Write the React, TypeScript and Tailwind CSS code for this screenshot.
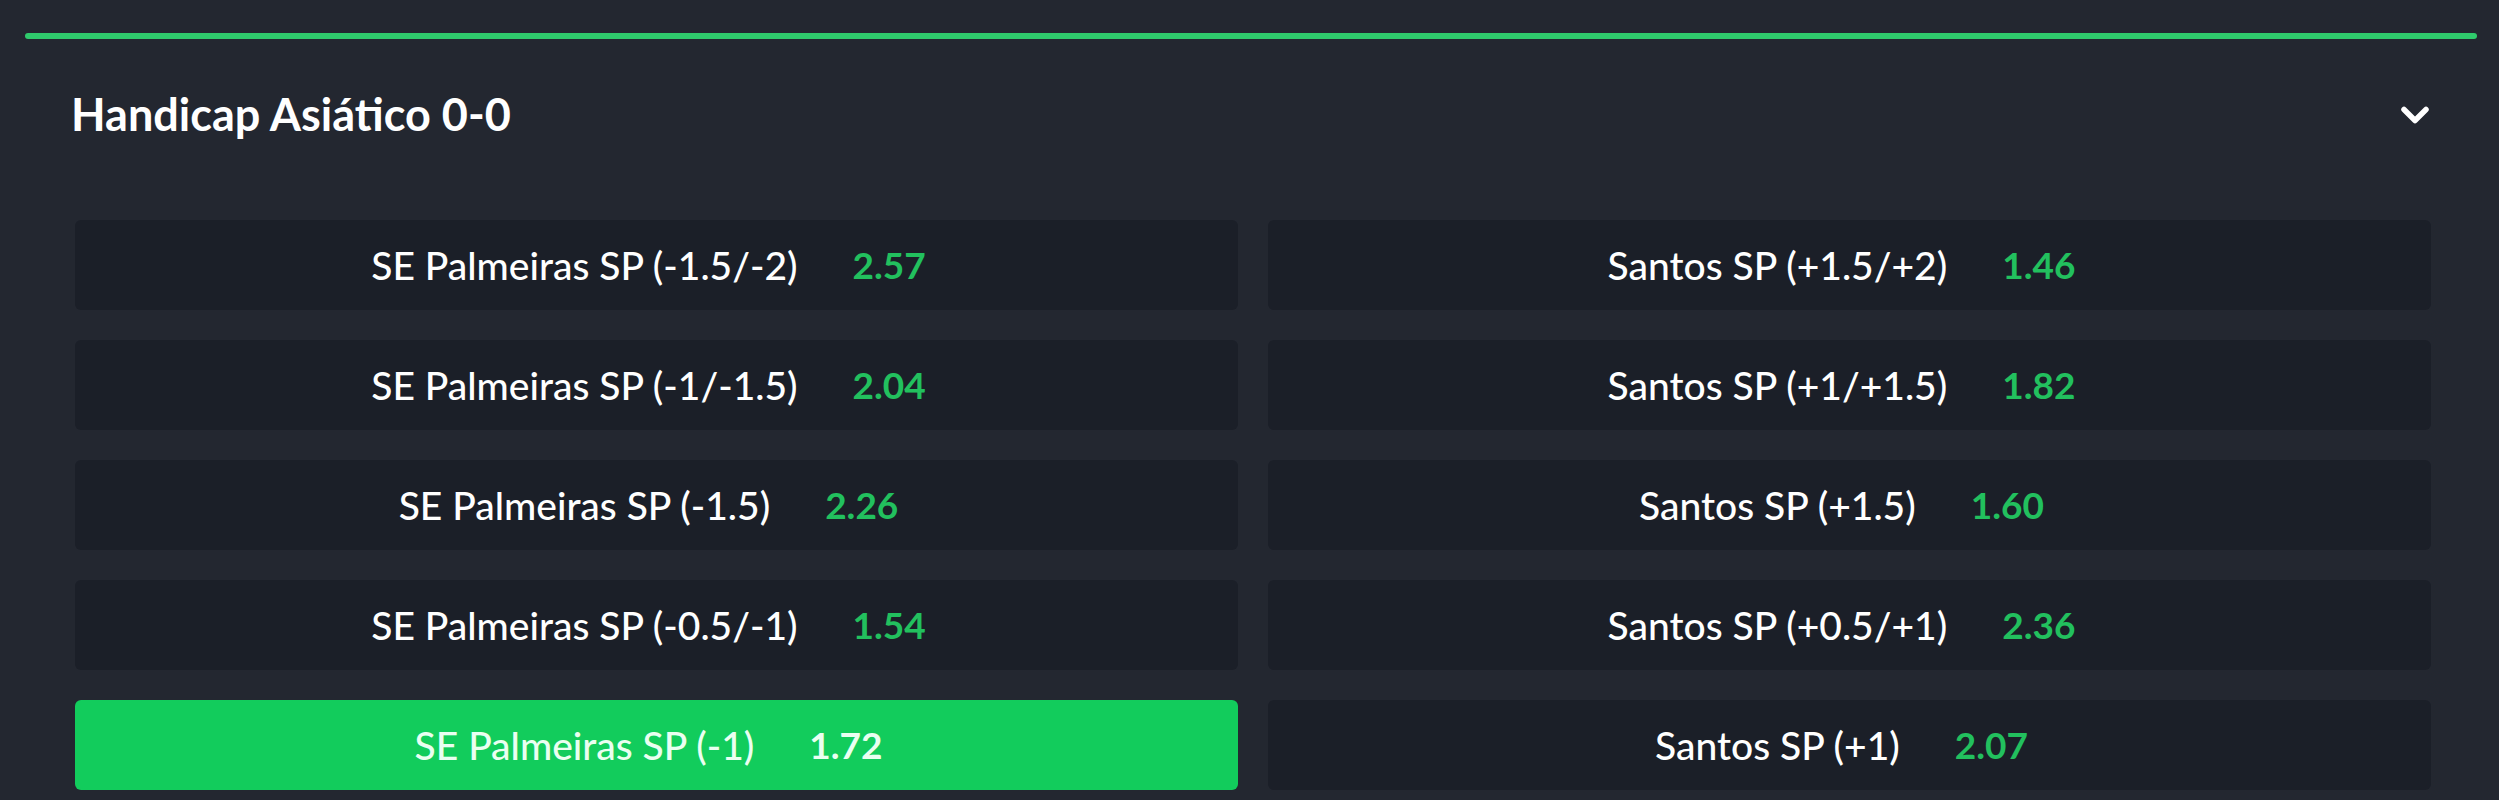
import { ChevronDown } from "lucide-react";

type Odd = {
  label: string;
  price: string;
  selected?: boolean;
};

const rows: [Odd, Odd][] = [
  [
    { label: "SE Palmeiras SP (-1.5/-2)", price: "2.57" },
    { label: "Santos SP (+1.5/+2)", price: "1.46" },
  ],
  [
    { label: "SE Palmeiras SP (-1/-1.5)", price: "2.04" },
    { label: "Santos SP (+1/+1.5)", price: "1.82" },
  ],
  [
    { label: "SE Palmeiras SP (-1.5)", price: "2.26" },
    { label: "Santos SP (+1.5)", price: "1.60" },
  ],
  [
    { label: "SE Palmeiras SP (-0.5/-1)", price: "1.54" },
    { label: "Santos SP (+0.5/+1)", price: "2.36" },
  ],
  [
    { label: "SE Palmeiras SP (-1)", price: "1.72", selected: true },
    { label: "Santos SP (+1)", price: "2.07" },
  ],
];

function OddButton({ odd }: { odd: Odd }) {
  return (
    <button
      className={
        odd.selected
          ? "flex h-[90px] items-center justify-center gap-[55px] rounded-md bg-[#12cc5c] pr-[16px] text-[#eafff1]"
          : "flex h-[90px] items-center justify-center gap-[55px] rounded-md bg-[#1b1f28] pr-[16px] text-white"
      }
    >
      <span className="text-[39px] font-medium">{odd.label}</span>
      <span
        className={
          odd.selected
            ? "text-[37px] font-bold text-[#eafff1]"
            : "text-[37px] font-bold text-[#22c05e]"
        }
      >
        {odd.price}
      </span>
    </button>
  );
}

export default function App() {
  return (
    <main
      className="h-[800px] w-full overflow-hidden bg-[#232730] pl-[25px] pr-[22px] pt-[33px]"
      style={{ fontFamily: "Lato, 'Noto Sans', sans-serif" }}
    >
      {/* green top border */}
      <div className="h-[6px] rounded-full bg-[#2fca6c]" />

      {/* header */}
      <div className="flex h-[152px] items-center justify-between pl-[46px] pr-[40px]">
        <h2 className="text-[45px] font-bold text-white">
          Handicap Asiático 0-0
        </h2>
        <ChevronDown className="h-[44px] w-[44px] text-white" strokeWidth={3} />
      </div>

      {/* odds grid */}
      <div className="mt-[29px] grid grid-cols-2 gap-[30px] pl-[50px] pr-[46px]">
        {rows.map((row, i) => (
          <div key={i} className="contents">
            <OddButton odd={row[0]} />
            <OddButton odd={row[1]} />
          </div>
        ))}
      </div>
    </main>
  );
}
